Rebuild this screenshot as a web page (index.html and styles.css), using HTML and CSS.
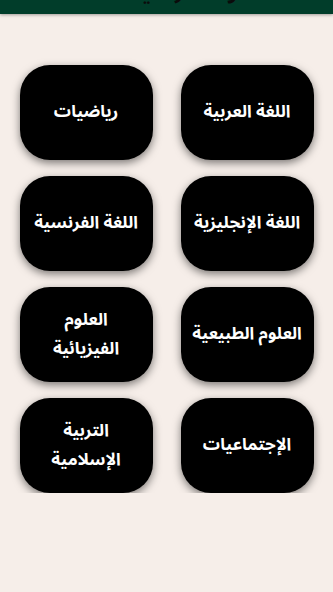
FILE: index.html
```html
<!DOCTYPE html>
<html lang="ar" dir="rtl">
<head>
<meta charset="utf-8">
<title>المواد</title>
<link rel="stylesheet" href="styles.css">
</head>
<body>
<header class="topbar">
  <div class="title">المواد الدراسية</div>
</header>
<main class="grid">
  <a class="subject">اللغة العربية</a>
  <a class="subject">رياضيات</a>
  <a class="subject">اللغة الإنجليزية</a>
  <a class="subject">اللغة الفرنسية</a>
  <a class="subject">العلوم الطبيعية</a>
  <a class="subject">العلوم<br>الفيزيائية</a>
  <a class="subject">الإجتماعيات</a>
  <a class="subject">التربية<br>الإسلامية</a>
</main>
</body>
</html>
```
FILE: styles.css
```css
html, body {
  margin: 0;
  padding: 0;
  background: #f6eee9;
  font-family: "Noto Sans Arabic", "DejaVu Sans", "Noto Sans", sans-serif;
}
.topbar {
  height: 14px;
  background: #013d2a;
  overflow: hidden;
  box-shadow: 0 1px 3px rgba(0, 0, 0, 0.35);
  display: flex;
  justify-content: center;
}
.title {
  color: #0b0b0b;
  font-size: 20px;
  font-weight: bold;
  line-height: 20px;
  margin-top: -17px;
  margin-left: 60px;
}
.grid {
  display: grid;
  grid-template-columns: 133px 133px;
  grid-auto-rows: 95px;
  column-gap: 28px;
  row-gap: 16px;
  justify-content: center;
  padding-top: 51px;
}
.subject {
  background: #000;
  color: #fff;
  border-radius: 30px;
  box-shadow: 0 3px 8px rgba(0, 0, 0, 0.5);
  display: flex;
  align-items: center;
  justify-content: center;
  text-align: center;
  font-size: 17px;
  font-weight: bold;
  line-height: 29px;
  padding: 0 3px;
}
```
